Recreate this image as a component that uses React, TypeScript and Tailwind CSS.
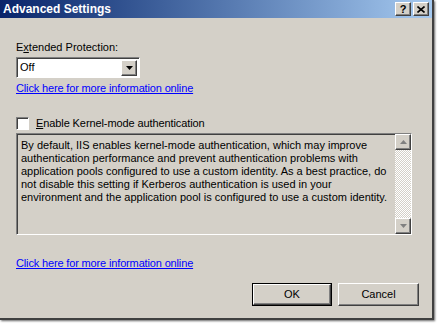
import React from "react";

const raised =
  "border border-t-white border-l-white border-r-[#404040] border-b-[#404040] shadow-[inset_-1px_-1px_0_#808080]";
const sunken =
  "border border-t-[#808080] border-l-[#808080] border-r-white border-b-white shadow-[inset_1px_1px_0_#404040]";

const info = [
  "By default, IIS enables kernel-mode authentication, which may improve",
  "authentication performance and prevent authentication problems with",
  "application pools configured to use a custom identity. As a best practice, do",
  "not disable this setting if Kerberos authentication is used in your",
  "environment and the application pool is configured to use a custom identity.",
];

function Arrow({ down, color }: { down?: boolean; color: string }) {
  return (
    <svg width="7" height="4" viewBox="0 0 7 4">
      <polygon points={down ? "0,0 7,0 3.5,4" : "0,4 7,4 3.5,0"} fill={color} />
    </svg>
  );
}

export default function App() {
  return (
    <div
      className="w-[439px] h-[324px] bg-white overflow-hidden text-[11px] text-black"
      style={{ fontFamily: '"Liberation Sans", Arial, sans-serif' }}
    >
      <div className="w-[434px] h-[320px] bg-[#d4d0c8] border-r-2 border-b-2 border-[#404040] shadow-[1px_1px_2px_rgba(0,0,0,0.6)] flex flex-col">
        {/* title bar */}
        <div className="h-[18px] flex items-center justify-between bg-gradient-to-r from-[#0a246a] to-[#a6caf0] pl-[3px] pr-[3px]">
          <span className="text-white font-bold text-[12px] leading-none">Advanced Settings</span>
          <div className="flex gap-[2px]">
            <div className={`w-[16px] h-[14px] bg-[#d4d0c8] flex items-center justify-center text-[11px] font-bold leading-none ${raised}`}>
              ?
            </div>
            <div className={`w-[16px] h-[14px] bg-[#d4d0c8] flex items-center justify-center ${raised}`}>
              <svg width="8" height="7" viewBox="0 0 8 7">
                <path d="M0.5 0.5 L7.5 6.5 M7.5 0.5 L0.5 6.5" stroke="#000" strokeWidth="1.6" />
              </svg>
            </div>
          </div>
        </div>

        <div className="flex flex-col pl-4 pr-[13px] pt-[23px] leading-[13px]">
          <div>
            E<span className="underline">x</span>tended Protection:
          </div>
          <div className={`mt-[3px] w-[124px] h-[21px] bg-white flex items-center justify-between pl-[3px] pr-[2px] ${sunken}`}>
            <span>Off</span>
            <div className={`w-[16px] h-[16px] bg-[#d4d0c8] flex items-center justify-center ${raised}`}>
              <Arrow down color="#000" />
            </div>
          </div>
          <a className="mt-[4px] text-[#0000ff] underline w-fit tracking-[-0.15px]">Click here for more information online</a>

          <div className="mt-[22px] flex items-center gap-[7px]">
            <div className={`w-[13px] h-[13px] bg-white ${sunken}`} />
            <span className="tracking-[-0.1px]">
              <span className="underline">E</span>nable Kernel-mode authentication
            </span>
          </div>

          <div className={`mt-[3px] w-[396px] h-[102px] flex ${sunken}`}>
            <div className="flex-1 pl-[4px] pt-[5px] text-[#000]">
              {info.map((l) => (
                <div key={l} className="whitespace-nowrap">{l}</div>
              ))}
            </div>
            <div className="w-[16px] flex flex-col bg-[repeating-conic-gradient(#ffffff_0_25%,#d4d0c8_0_50%)] bg-[length:2px_2px]">
              <div className={`h-[16px] bg-[#d4d0c8] flex items-center justify-center ${raised}`}>
                <Arrow color="#808080" />
              </div>
              <div className="flex-1" />
              <div className={`h-[16px] bg-[#d4d0c8] flex items-center justify-center ${raised}`}>
                <Arrow down color="#808080" />
              </div>
            </div>
          </div>

          <a className="mt-[22px] text-[#0000ff] underline w-fit tracking-[-0.15px]">Click here for more information online</a>

          <div className="mt-[13px] flex justify-end gap-[6px]">
            <div className="w-[80px] h-[23px] border border-black">
              <div className={`w-full h-full bg-[#d4d0c8] flex items-center justify-center ${raised}`}>OK</div>
            </div>
            <div className={`w-[81px] h-[23px] bg-[#d4d0c8] flex items-center justify-center ${raised}`}>Cancel</div>
          </div>
        </div>
      </div>
    </div>
  );
}
